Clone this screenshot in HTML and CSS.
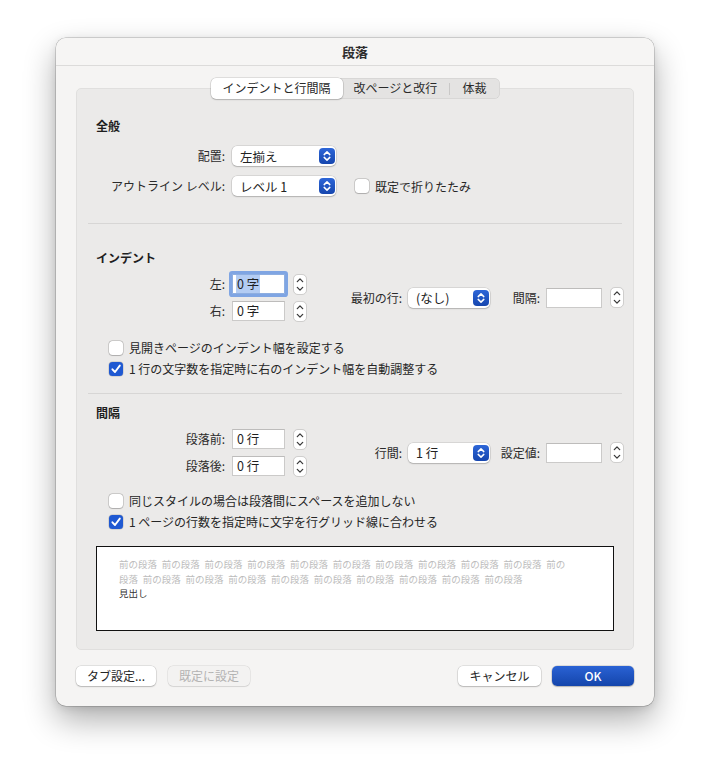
FILE: index.html
```html
<!DOCTYPE html>
<html lang="ja">
<head>
<meta charset="utf-8">
<title>段落</title>
<link rel="stylesheet" href="styles.css">
</head>
<body>
<div class="window">
  <div class="titlebar">段落</div>
  <div class="content">
    <div class="tabs">
      <div class="tab active">インデントと行間隔</div>
      <div class="tab t2">改ページと改行</div>
      <div class="tab-sep"></div>
      <div class="tab t3">体裁</div>
    </div>
    <div class="panel">
      <div class="section-title">全般</div>
      <div class="row r1">
        <div class="label lw">配置:</div>
        <div class="popup w104"><span>左揃え</span><svg class="knob" width="16" height="16" viewBox="0 0 16 16"><rect width="16" height="16" rx="4" fill="url(#kg)"/><path d="M5.2 6.6 L8 3.9 L10.8 6.6 M5.2 9.4 L8 12.1 L10.8 9.4" fill="none" stroke="#fff" stroke-width="1.5" stroke-linecap="round" stroke-linejoin="round"/></svg></div>
      </div>
      <div class="row r2">
        <div class="label lw">アウトライン レベル:</div>
        <div class="popup w104"><span>レベル 1</span><svg class="knob" width="16" height="16" viewBox="0 0 16 16"><rect width="16" height="16" rx="4" fill="url(#kg)"/><path d="M5.2 6.6 L8 3.9 L10.8 6.6 M5.2 9.4 L8 12.1 L10.8 9.4" fill="none" stroke="#fff" stroke-width="1.5" stroke-linecap="round" stroke-linejoin="round"/></svg></div>
        <div class="check inline"><span class="box"></span><span>既定で折りたたみ</span></div>
      </div>

      <div class="sep s1"></div>

      <div class="section-title t2">インデント</div>
      <div class="group">
        <div class="pairs">
          <div class="row">
            <div class="label lw">左:</div>
            <div class="field w53 focus"><span class="sel">0 字</span></div>
            <svg class="stepper" width="14" height="21" viewBox="0 0 14 21"><rect x="0.5" y="0.5" width="13" height="20" rx="4.5" fill="#fff" stroke="#cfcecd"/><path d="M4.3 7.6 L7 4.9 L9.7 7.6 M4.3 13.4 L7 16.1 L9.7 13.4" fill="none" stroke="#3a3a3a" stroke-width="1.3" stroke-linecap="round" stroke-linejoin="round"/></svg>
          </div>
          <div class="row">
            <div class="label lw">右:</div>
            <div class="field w53"><span>0 字</span></div>
            <svg class="stepper" width="14" height="21" viewBox="0 0 14 21"><rect x="0.5" y="0.5" width="13" height="20" rx="4.5" fill="#fff" stroke="#cfcecd"/><path d="M4.3 7.6 L7 4.9 L9.7 7.6 M4.3 13.4 L7 16.1 L9.7 13.4" fill="none" stroke="#3a3a3a" stroke-width="1.3" stroke-linecap="round" stroke-linejoin="round"/></svg>
          </div>
        </div>
        <div class="side">
          <div class="label sl1">最初の行:</div>
          <div class="popup w82"><span>(なし)</span><svg class="knob" width="16" height="16" viewBox="0 0 16 16"><rect width="16" height="16" rx="4" fill="url(#kg)"/><path d="M5.2 6.6 L8 3.9 L10.8 6.6 M5.2 9.4 L8 12.1 L10.8 9.4" fill="none" stroke="#fff" stroke-width="1.5" stroke-linecap="round" stroke-linejoin="round"/></svg></div>
          <div class="label sl2">間隔:</div>
          <div class="field w56"></div>
          <svg class="stepper" width="14" height="21" viewBox="0 0 14 21"><rect x="0.5" y="0.5" width="13" height="20" rx="4.5" fill="#fff" stroke="#cfcecd"/><path d="M4.3 7.6 L7 4.9 L9.7 7.6 M4.3 13.4 L7 16.1 L9.7 13.4" fill="none" stroke="#3a3a3a" stroke-width="1.3" stroke-linecap="round" stroke-linejoin="round"/></svg>
        </div>
      </div>
      <div class="checks c1">
        <div class="check"><span class="box"></span><span>見開きページのインデント幅を設定する</span></div>
        <div class="check"><span class="box on"><svg width="14" height="14" viewBox="0 0 14 14"><path d="M3.4 7.3 L6 10 L10.8 3.6" fill="none" stroke="#fff" stroke-width="1.9" stroke-linecap="round" stroke-linejoin="round"/></svg></span><span>1 行の文字数を指定時に右のインデント幅を自動調整する</span></div>
      </div>

      <div class="sep s2"></div>

      <div class="section-title t3">間隔</div>
      <div class="group">
        <div class="pairs">
          <div class="row">
            <div class="label lw">段落前:</div>
            <div class="field w53"><span>0 行</span></div>
            <svg class="stepper" width="14" height="21" viewBox="0 0 14 21"><rect x="0.5" y="0.5" width="13" height="20" rx="4.5" fill="#fff" stroke="#cfcecd"/><path d="M4.3 7.6 L7 4.9 L9.7 7.6 M4.3 13.4 L7 16.1 L9.7 13.4" fill="none" stroke="#3a3a3a" stroke-width="1.3" stroke-linecap="round" stroke-linejoin="round"/></svg>
          </div>
          <div class="row">
            <div class="label lw">段落後:</div>
            <div class="field w53"><span>0 行</span></div>
            <svg class="stepper" width="14" height="21" viewBox="0 0 14 21"><rect x="0.5" y="0.5" width="13" height="20" rx="4.5" fill="#fff" stroke="#cfcecd"/><path d="M4.3 7.6 L7 4.9 L9.7 7.6 M4.3 13.4 L7 16.1 L9.7 13.4" fill="none" stroke="#3a3a3a" stroke-width="1.3" stroke-linecap="round" stroke-linejoin="round"/></svg>
          </div>
        </div>
        <div class="side">
          <div class="label sl1">行間:</div>
          <div class="popup w82"><span>1 行</span><svg class="knob" width="16" height="16" viewBox="0 0 16 16"><rect width="16" height="16" rx="4" fill="url(#kg)"/><path d="M5.2 6.6 L8 3.9 L10.8 6.6 M5.2 9.4 L8 12.1 L10.8 9.4" fill="none" stroke="#fff" stroke-width="1.5" stroke-linecap="round" stroke-linejoin="round"/></svg></div>
          <div class="label sl2">設定値:</div>
          <div class="field w56"></div>
          <svg class="stepper" width="14" height="21" viewBox="0 0 14 21"><rect x="0.5" y="0.5" width="13" height="20" rx="4.5" fill="#fff" stroke="#cfcecd"/><path d="M4.3 7.6 L7 4.9 L9.7 7.6 M4.3 13.4 L7 16.1 L9.7 13.4" fill="none" stroke="#3a3a3a" stroke-width="1.3" stroke-linecap="round" stroke-linejoin="round"/></svg>
        </div>
      </div>
      <div class="checks c2">
        <div class="check"><span class="box"></span><span>同じスタイルの場合は段落間にスペースを追加しない</span></div>
        <div class="check"><span class="box on"><svg width="14" height="14" viewBox="0 0 14 14"><path d="M3.4 7.3 L6 10 L10.8 3.6" fill="none" stroke="#fff" stroke-width="1.9" stroke-linecap="round" stroke-linejoin="round"/></svg></span><span>1 ページの行数を指定時に文字を行グリッド線に合わせる</span></div>
      </div>

      <div class="preview">
        <div class="prev-text">前の段落 前の段落 前の段落 前の段落 前の段落 前の段落 前の段落 前の段落 前の段落 前の段落 前の<br>段落 前の段落 前の段落 前の段落 前の段落 前の段落 前の段落 前の段落 前の段落 前の段落</div>
        <div class="heading-text">見出し</div>
      </div>
    </div>

    <div class="buttons">
      <div class="btn b1">タブ設定...</div>
      <div class="btn b2 disabled">既定に設定</div>
      <div class="spacer"></div>
      <div class="btn b3">キャンセル</div>
      <div class="btn ok">OK</div>
    </div>
  </div>
</div>
<svg class="defs" width="0" height="0">
  <defs>
    <linearGradient id="kg" x1="0" y1="0" x2="0" y2="1">
      <stop offset="0" stop-color="#2d66d8"/>
      <stop offset="1" stop-color="#1646ae"/>
    </linearGradient>
  </defs>
</svg>
</body>
</html>
```
FILE: styles.css
```css
* { box-sizing: border-box; }

html, body {
  margin: 0;
  padding: 0;
  background: #ffffff;
}

body {
  font-family: "Noto Sans CJK JP", "Noto Sans", sans-serif;
  font-size: 12px;
  color: #262626;
  padding-top: 38px;
  min-height: 780px;
}

.defs { position: absolute; width: 0; height: 0; }

.window {
  position: relative;
  width: 598px;
  height: 668px;
  margin-left: 56px;
  background: #f5f4f3;
  border-radius: 10px;
  box-shadow: 0 0 0 0.5px rgba(0,0,0,0.28), 0 14px 32px rgba(0,0,0,0.32), 0 2px 8px rgba(0,0,0,0.10);
  overflow: hidden;
}

.titlebar {
  height: 28px;
  line-height: 27px;
  text-align: center;
  font-size: 13px;
  font-weight: 700;
  color: #2e2e2e;
  background: #f6f5f4;
  border-bottom: 1px solid #dcdbda;
}

.content {
  padding: 0 20px;
}

/* Tabs */
.tabs {
  position: relative;
  z-index: 1;
  display: flex;
  align-items: center;
  width: 289px;
  height: 21px;
  margin: 12px auto -11px;
  background: #e4e3e2;
  border-radius: 6px;
  box-shadow: inset 0 0 0 0.5px rgba(0,0,0,0.10);
}
.tab {
  height: 21px;
  line-height: 20px;
  text-align: center;
  font-size: 12px;
  color: #2a2a2a;
}
.tab.active {
  width: 132px;
  background: #ffffff;
  border-radius: 5px;
  box-shadow: 0 0 0 0.5px rgba(0,0,0,0.18), 0 1px 1.5px rgba(0,0,0,0.16);
}
.tab.t2 { width: 106px; }
.tab.t3 { width: 50px; }
.tab-sep {
  width: 1px;
  height: 12px;
  background: #c9c8c7;
}

/* Panel */
.panel {
  height: 562px;
  background: #ebeae9;
  border: 1px solid #e0dfde;
  border-radius: 5px;
  padding-top: 28px;
}

.section-title {
  margin-left: 19px;
  height: 17px;
  line-height: 17px;
  font-weight: 700;
  font-size: 12px;
  color: #1e1e1e;
}
.section-title.t2 { margin-top: 25px; }
.section-title.t3 { margin-top: 10px; }

.row {
  display: flex;
  align-items: center;
  height: 20px;
}
.row.r1 { margin-top: 12px; }
.row.r2 { margin-top: 10px; }

.label {
  text-align: right;
  white-space: nowrap;
  color: #2b2b2b;
  line-height: 20px;
}
.lw { width: 148px; margin-right: 7px; }
.sl1 { width: 93px; margin-right: 6px; }
.sl2 { width: 50px; margin-right: 6px; }

/* Popup buttons */
.popup {
  display: flex;
  align-items: center;
  justify-content: space-between;
  height: 20px;
  padding: 0 1px 0 8px;
  background: #ffffff;
  border-radius: 5px;
  box-shadow: 0 0 0 0.5px rgba(0,0,0,0.16), 0 1px 1.5px rgba(0,0,0,0.18);
  font-size: 12.5px;
  color: #222;
}
.w104 { width: 104px; }
.w82 { width: 82px; }
.knob { display: block; flex: none; }

/* Text fields */
.field {
  height: 20px;
  background: #ffffff;
  border: 1px solid #cbcac9;
  border-top-color: #bdbcbb;
  padding-left: 3px;
  font-size: 12.5px;
  line-height: 18px;
  color: #1f1f1f;
  display: flex;
  align-items: stretch;
}
.field span { padding: 0 1px; }
.field.focus {
  border-color: #8eaee0;
  box-shadow: 0 0 0 3px #7fa5e3;
  border-radius: 1px;
}
.field .sel { background: #b3ccf3; }
.w53 { width: 53px; }
.w56 { width: 56px; }

.stepper {
  display: block;
  flex: none;
  margin-left: 8px;
  filter: drop-shadow(0 0.5px 0.5px rgba(0,0,0,0.12));
}

/* Groups */
.group {
  display: flex;
  align-items: center;
  margin-top: 8px;
}
.pairs {
  width: 232px;
  display: flex;
  flex-direction: column;
  gap: 7px;
}
.side {
  display: flex;
  align-items: center;
}

/* Checkboxes */
.checks { margin-left: 32px; }
.checks.c1 { margin-top: 16px; }
.checks.c2 { margin-top: 14px; }

.check {
  display: flex;
  align-items: center;
  height: 21px;
  color: #262626;
  white-space: nowrap;
}
.check.inline {
  height: 20px;
  margin-left: 19px;
}
.box {
  width: 14px;
  height: 14px;
  flex: none;
  margin-right: 6px;
  background: #ffffff;
  border-radius: 3.5px;
  box-shadow: 0 0 0 0.5px rgba(0,0,0,0.25), 0 0.5px 1px rgba(0,0,0,0.15);
}
.box svg { display: block; }
.box.on {
  background: #1f59d2;
  box-shadow: 0 0 0 0.5px rgba(0,0,0,0.2);
}

/* Separators */
.sep {
  height: 1px;
  margin: 0 11px 0 11px;
  background: #d7d6d5;
}
.sep.s1 { margin-top: 27px; }
.sep.s2 { margin-top: 14px; }

/* Preview */
.preview {
  margin: 14px 19px 0 19px;
  height: 85px;
  background: #ffffff;
  border: 1px solid #111111;
  padding: 10px 0 0 22px;
}
.prev-text {
  font-size: 9.5px;
  line-height: 14.5px;
  word-spacing: 2.6px;
  color: #bcbcbc;
  white-space: nowrap;
}
.heading-text {
  font-size: 9.5px;
  line-height: 14.5px;
  color: #333333;
}

/* Bottom buttons */
.buttons {
  display: flex;
  align-items: center;
  margin-top: 16px;
  height: 20px;
}
.btn {
  height: 20px;
  line-height: 20px;
  text-align: center;
  font-size: 12px;
  color: #262626;
  background: #ffffff;
  border-radius: 5px;
  box-shadow: 0 0 0 0.5px rgba(0,0,0,0.16), 0 1px 1.5px rgba(0,0,0,0.18);
}
.b1 { width: 80px; }
.b2 { width: 82px; margin-left: 12px; }
.b3 { width: 83px; }
.ok { width: 82px; margin-left: 11px; }
.spacer { flex: 1; }
.btn.disabled {
  background: #f3f2f1;
  color: #b3b3b3;
  box-shadow: 0 0 0 0.5px rgba(0,0,0,0.10), 0 0.5px 1px rgba(0,0,0,0.08);
}
.btn.ok {
  color: #ffffff;
  font-weight: 500;
  background: linear-gradient(#2a62d4, #1445ab);
  box-shadow: 0 0 0 0.5px rgba(0,0,0,0.2), 0 1px 1.5px rgba(0,0,0,0.18);
}
```
